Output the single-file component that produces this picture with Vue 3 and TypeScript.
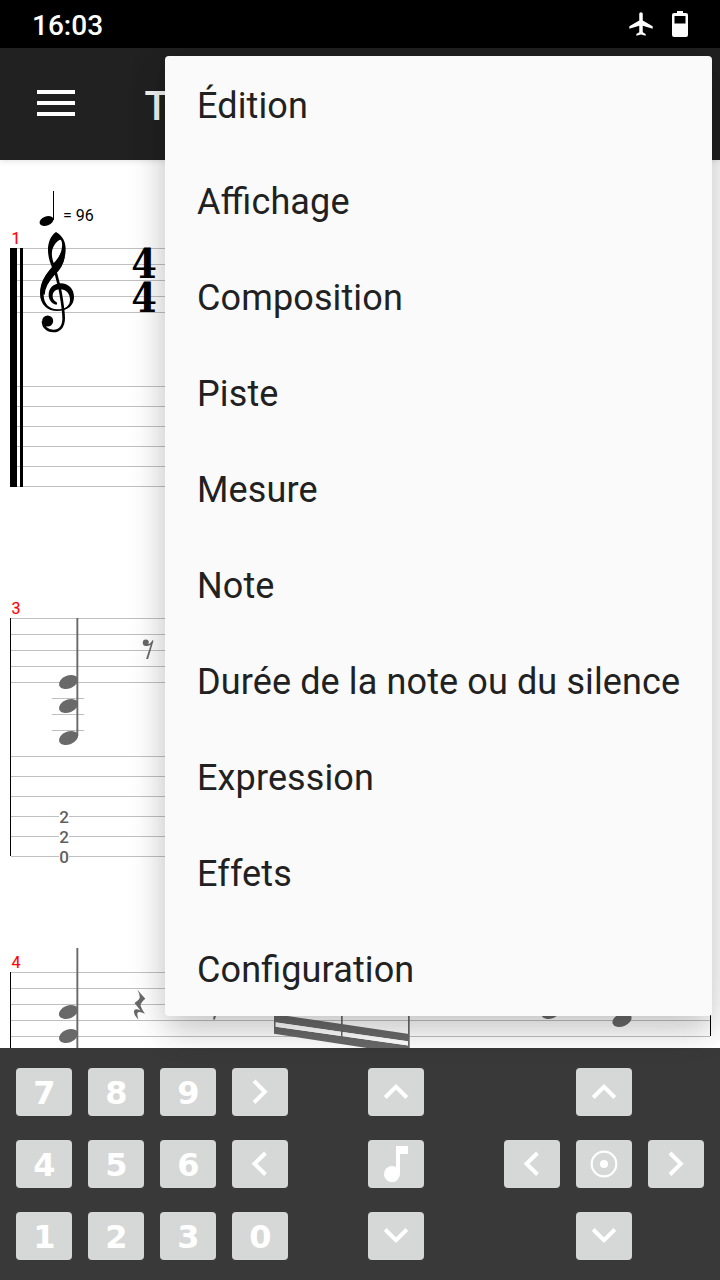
<script setup lang="ts">
interface Key {
  label?: string
  icon?: string
}

const menuItems: string[] = [
  'Édition', 'Affichage', 'Composition', 'Piste', 'Mesure', 'Note',
  'Durée de la note ou du silence', 'Expression', 'Effets', 'Configuration',
]

const icons: Record<string, string> = {
  right: 'M22 13 32.800 23.800 22 34.500',
  left: 'M33.500 13 22.500 23.800 33.500 34.500',
  up: 'M17.200 29.500 28 18.800 38.800 29.500',
  down: 'M17.200 17.500 28 28.200 38.800 17.500',
}

const numberKeys: Key[] = [
  { label: '7' }, { label: '8' }, { label: '9' }, { icon: 'right' },
  { label: '4' }, { label: '5' }, { label: '6' }, { icon: 'left' },
  { label: '1' }, { label: '2' }, { label: '3' }, { label: '0' },
]
const durationKeys: Key[] = [{ icon: 'up' }, { icon: 'note' }, { icon: 'down' }]
const moveKeys: Key[] = [
  {}, { icon: 'up' }, {},
  { icon: 'left' }, { icon: 'target' }, { icon: 'right' },
  {}, { icon: 'down' }, {},
]
const groups = [
  { name: 'numbers', keys: numberKeys },
  { name: 'duration', keys: durationKeys },
  { name: 'moves', keys: moveKeys },
]

const staffLines: { y: number; x: number }[] = [
  ...[248, 264, 280, 296, 312, 386, 406, 426, 446, 466, 486].map((y) => ({ y, x: 17 })),
  ...[618, 634, 650, 666, 682, 756, 776, 796, 816, 836, 856].map((y) => ({ y, x: 11 })),
  ...[972, 988, 1004, 1020, 1036].map((y) => ({ y, x: 11 })),
]
const ledgerLines: number[] = [698, 714, 730]
const heads: { x: number; y: number }[] = [
  { x: 68.5, y: 682 }, { x: 68.5, y: 706 }, { x: 68.5, y: 738 },
  { x: 68.5, y: 1012 }, { x: 68.5, y: 1036 },
  { x: 551, y: 1012 }, { x: 622, y: 1020 },
]
const frets: { value: string; y: number }[] = [
  { value: '2', y: 816 }, { value: '2', y: 836 }, { value: '0', y: 856 },
]
</script>

<template>
  <div class="screen">
    <header class="status">
      <span class="clock">16:03</span>
      <svg class="plane" width="28" height="28" viewBox="0 0 24 24">
        <path d="M22 16v-2l-8.500-5V3.500C13.500 2.670 12.830 2 12 2s-1.500.670-1.500 1.500V9L2 14v2l8.500-2.500V19L8 20.500V22l4-1 4 1v-1.500L13.500 19v-5.500L22 16z" />
      </svg>
      <svg class="battery" width="16" height="26" viewBox="0 0 16 26">
        <path fill-rule="evenodd" d="M5 0h6v2h3q2 0 2 2v20q0 2-2 2H2q-2 0-2-2V4q0-2 2-2h3zM2.500 5v7.500h11V5z" />
      </svg>
    </header>
    <div class="appbar">
      <div class="burger"><i /><i /><i /></div>
      <span class="title">T</span>
    </div>

    <main class="score">
      <svg width="720" height="888" viewBox="0 160 720 888">
        <g fill="#c0c0c0" shape-rendering="crispEdges">
          <rect v-for="l in staffLines" :key="l.y" :x="l.x" :y="l.y" :width="710 - l.x" height="1" />
          <rect v-for="y in ledgerLines" :key="y" x="52" :y="y" width="32" height="1" />
        </g>
        <g shape-rendering="crispEdges">
          <rect x="10" y="248" width="7" height="239" />
          <rect x="20" y="248" width="3" height="239" />
          <rect x="10" y="618" width="1" height="238" />
          <rect x="10" y="972" width="1" height="76" />
          <rect x="710" y="972" width="1" height="64" />
        </g>
        <ellipse cx="46.500" cy="221" rx="7.200" ry="4.600" transform="rotate(-20 46.500 221)" />
        <rect x="53" y="191" width="1" height="29" />
        <text class="tempo" x="63" y="221">= 96</text>
        <text class="measure" x="11.500" y="244">1</text>
        <text class="measure" x="11.500" y="614">3</text>
        <text class="measure" x="11.500" y="968">4</text>

        <!-- treble clef -->
        <g transform="translate(0 180) scale(.33333)">
          <path
            fill-rule="evenodd"
            d="M168 156C150 168 143 192 144 213C145 235 151 250 156 262C139 281 120 306 120 341C120 374 143 393 172 393C203 393 222 376 222 351C222 326 205 310 182 310C160 310 146 325 146 345C146 359 155 371 169 374C172 373 172 370 170 367C161 362 158 356 158 348C158 336 167 328 180 328C199 328 210 341 210 359C210 378 195 388 172 388C148 388 131 371 131 345C131 322 146 303 163 284C186 261 197 236 197 207C197 186 188 167 168 156ZM161 249C154 230 154 214 160 201C165 190 174 180 182 179C188 186 187 200 184 212C180 228 170 240 161 249Z"
          />
          <path d="M156 262Q120 303 122 335L134 345Q134 318 163 286Q190 262 194 232L184 215Q178 232 156 262Z" />
          <path fill="none" stroke="#000" stroke-width="8" d="M163 262C171 294 178 318 182 340C187 370 191 395 191 415C191 440 178 453 160 453C141 453 129 440 129 424" />
          <circle cx="143" cy="423" r="16.500" />
        </g>
        <g class="meter">
          <text transform="translate(144 277.500) scale(.9 1)">4</text>
          <text transform="translate(144 311.500) scale(.9 1)">4</text>
        </g>

        <g fill="#696969">
          <ellipse v-for="(h, i) in heads" :key="i" :cx="h.x" :cy="h.y" rx="10" ry="6.400" :transform="`rotate(-22 ${h.x} ${h.y})`" />
          <rect x="76.400" y="618" width="1.900" height="118" />
          <rect x="76.400" y="948" width="1.900" height="100" />
          <path d="M142.800 642.500a3 3 0 1 1 6 0q0 1 -.8 1.800q2.500-.3 4.300-4l1.200.5-5.400 18.200h-2l4.600-14.200q-2.300 1.400-4.800 1.200a3.200 3.200 0 0 1-3.100-3.500z" />
          <path d="M137.300 989.800L145.300 998.700Q141 1002.500 140.500 1005Q141 1008 145 1013.800Q138.500 1010.500 137.500 1013Q136.800 1015 138.600 1019.700Q134 1015.500 133.800 1011.500Q134.500 1007.500 140.500 1010.500L134.500 1003Q139.500 999.500 139.800 997.500Q139.800 994 137.300 989.800Z" />
          <path d="M215 1010h2.500l-2.500 9.500h-2z" />
          <path d="M274 1014L409 1034V1041.500L274 1022.200ZM274 1026.500L409 1045.500V1050H380L274 1033.700Z" />
          <rect x="274" y="1010" width="1.700" height="23" />
          <rect x="341" y="1010" width="1.700" height="28" />
          <rect x="408" y="1010" width="1.700" height="38" />
        </g>
        <path fill="#fff" d="M275.700 1022.200L341 1031.700V1036L275.700 1026.700ZM342.700 1032L408 1041.300V1045.500L342.700 1036.200Z" />
        <g v-for="f in frets" :key="f.y">
          <rect x="59" :y="f.y - 6" width="10" height="13" fill="#fff" />
          <text class="fret" x="64" :y="f.y + 6.500">{{ f.value }}</text>
        </g>
      </svg>
    </main>

    <footer class="keypad">
      <div v-for="g in groups" :key="g.name" class="group" :class="g.name">
        <div v-for="(k, i) in g.keys" :key="i" class="key" :class="{ blank: !k.label && !k.icon }">
          <span v-if="k.label">{{ k.label }}</span>
          <svg v-else-if="k.icon" width="56" height="48" viewBox="0 0 56 48">
            <path v-if="k.icon === 'note'" fill="#fff" d="M28 6h12v8h-8v20a8 8 0 1 1-4-6.930z" />
            <template v-else-if="k.icon === 'target'">
              <circle cx="28" cy="24" r="12.300" fill="none" stroke="#fff" stroke-width="2.200" />
              <circle cx="28" cy="24" r="4" fill="#fff" />
            </template>
            <path v-else :d="icons[k.icon]" fill="none" stroke="#fff" stroke-width="4" />
          </svg>
        </div>
      </div>
    </footer>

    <nav class="menu">
      <div v-for="m in menuItems" :key="m" class="item">{{ m }}</div>
    </nav>
  </div>
</template>

<style>
body {
  margin: 0;
}
</style>

<style scoped>
.screen {
  position: relative;
  display: flex;
  flex-direction: column;
  width: 720px;
  height: 1280px;
  overflow: hidden;
  background: #fff;
  font-family: Roboto, sans-serif;
}
.status {
  box-sizing: border-box;
  display: flex;
  flex: none;
  align-items: center;
  height: 48px;
  padding: 0 32px;
  background: #000;
  color: #fff;
  fill: #fff;
}
.clock {
  flex: 1;
  padding-top: 3px;
  font-size: 28px;
  font-weight: 500;
}
.plane {
  margin-right: 17px;
}
.appbar {
  position: relative;
  z-index: 1;
  display: flex;
  flex: none;
  align-items: center;
  height: 112px;
  background: #212121;
  box-shadow: 0 1px 6px rgba(0, 0, 0, 0.12);
}
.burger {
  display: grid;
  gap: 7px;
  width: 38px;
  margin: 0 69.5px 2px 37px;
}
.burger i {
  height: 4px;
  background: #fff;
}
.title {
  padding-top: 5px;
  color: #f4f4f4;
  font-size: 40px;
  font-weight: 500;
}
.score {
  flex: none;
  height: 888px;
}
.score svg {
  display: block;
}
.tempo {
  font-size: 16px;
}
.measure {
  fill: #f00;
  font-size: 16px;
  stroke: #f00;
  stroke-width: 0.15px;
}
.fret {
  fill: #606060;
  font-size: 17px;
  font-weight: 500;
  text-anchor: middle;
}
.meter {
  font: bold 41px "DejaVu Serif", serif;
  text-anchor: middle;
}
.keypad {
  box-sizing: border-box;
  display: flex;
  flex: none;
  align-items: flex-start;
  height: 232px;
  padding: 20px 16px;
  background: #393939;
}
.group {
  display: grid;
  grid-auto-rows: 48px;
  gap: 24px 16px;
}
.numbers {
  grid-template-columns: repeat(4, 56px);
}
.duration {
  grid-template-columns: 56px;
  margin: 0 80px;
}
.moves {
  grid-template-columns: repeat(3, 56px);
}
.key {
  display: flex;
  align-items: center;
  justify-content: center;
  border-radius: 4px;
  background: #d6d8d7;
  color: #fff;
  font: bold 32px/48px "DejaVu Sans", sans-serif;
}
.key span {
  padding: 1px 0 0 1px;
}
.key.blank {
  visibility: hidden;
}
.menu {
  position: absolute;
  z-index: 2;
  top: 56px;
  left: 165px;
  width: 547px;
  border-radius: 4px;
  background: #fafafa;
  box-shadow: 0 16px 32px rgba(0, 0, 0, 0.17), 0 0 42px rgba(0, 0, 0, 0.1);
}
.item {
  box-sizing: border-box;
  height: 96px;
  padding: 2px 32px 0;
  color: #212121;
  font-size: 36px;
  line-height: 96px;
  letter-spacing: 0.12px;
  font-feature-settings: "liga" 1;
  white-space: nowrap;
}
</style>
